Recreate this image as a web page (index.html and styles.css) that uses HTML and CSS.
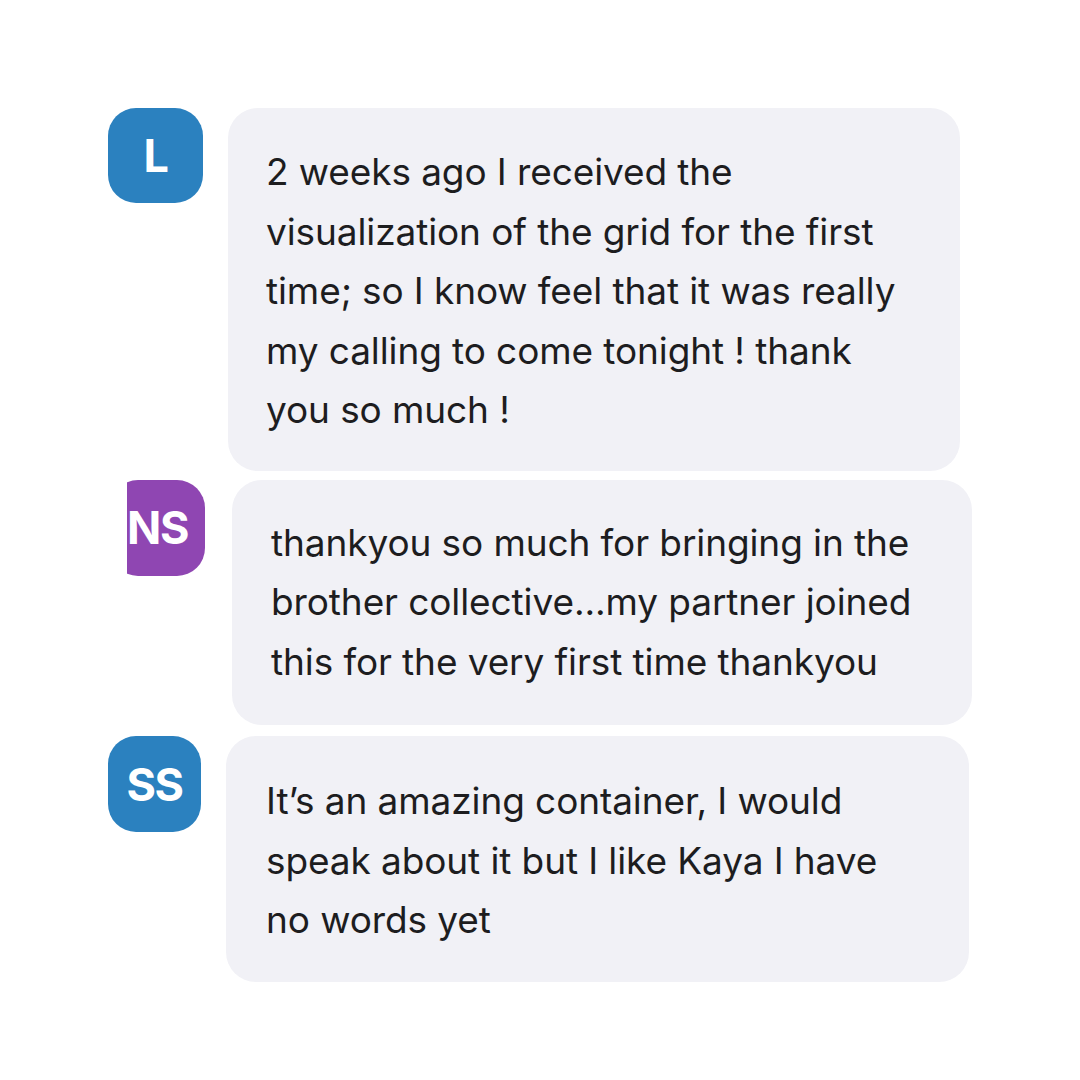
FILE: index.html
```html
<!DOCTYPE html>
<html>
<head>
    <title>Comments</title>
    <link rel="stylesheet" href="styles.css">
</head>
<body>
    <div class="thread">
        <div class="comment comment-first">
            <div class="avatar avatar-blue">L</div>
            <div class="bubble bubble-first">
                <p>2 weeks ago I received the visualization of the grid for the first time; so I know feel that it was really my calling to come tonight ! thank you so much !</p>
            </div>
        </div>

        <div class="comment comment-second">
            <div class="avatar-clip">
                <div class="avatar avatar-purple">NS</div>
            </div>
            <div class="bubble bubble-second">
                <p>thankyou so much for bringing in the brother collective...my partner joined this for the very first time thankyou</p>
            </div>
        </div>

        <div class="comment comment-third">
            <div class="avatar avatar-blue avatar-small">SS</div>
            <div class="bubble bubble-third">
                <p>It’s an amazing container, I would speak about it but I like Kaya I have no words yet</p>
            </div>
        </div>
    </div>
</body>
</html>
```

FILE: styles.css
```css
body {
    margin: 0;
    background: #fff;
    font-family: Inter, "Liberation Sans", sans-serif;
    color: #1d1d1f;
}
.thread {
    padding-top: 108px;
    display: flex;
    flex-direction: column;
    gap: 9px;
}
.comment {
    display: flex;
    align-items: flex-start;
    gap: 25px;
}
.comment-first {
    margin-left: 108px;
}
.comment-second {
    margin-left: 127px;
}
.comment-third {
    margin-left: 108px;
    margin-top: 2px;
}
.avatar {
    flex: none;
    width: 95px;
    height: 95px;
    border-radius: 28px;
    display: flex;
    align-items: center;
    justify-content: center;
    color: #fff;
    font-weight: 700;
    font-size: 45px;
    letter-spacing: -1.5px;
}
.avatar-small {
    width: 93px;
    height: 96px;
}
.avatar-blue {
    background: #2b81bf;
}
.avatar-purple {
    background: #8f46b2;
    margin-left: -17px;
    height: 96px;
}
.avatar-clip {
    flex: none;
    width: 80px;
    overflow: hidden;
}
.bubble {
    background: #f1f1f6;
    border-radius: 30px;
    padding: 34px 38px 31px;
    box-sizing: border-box;
}
.bubble p {
    margin: 0;
    font-size: 37px;
    line-height: 59.5px;
    letter-spacing: -0.1px;
}
.bubble-first {
    width: 732px;
}
.bubble-second {
    width: 740px;
    padding: 33px 30px 34px 39px;
}
.bubble-third {
    width: 743px;
    padding: 35px 38px 32px 40px;
}
```
